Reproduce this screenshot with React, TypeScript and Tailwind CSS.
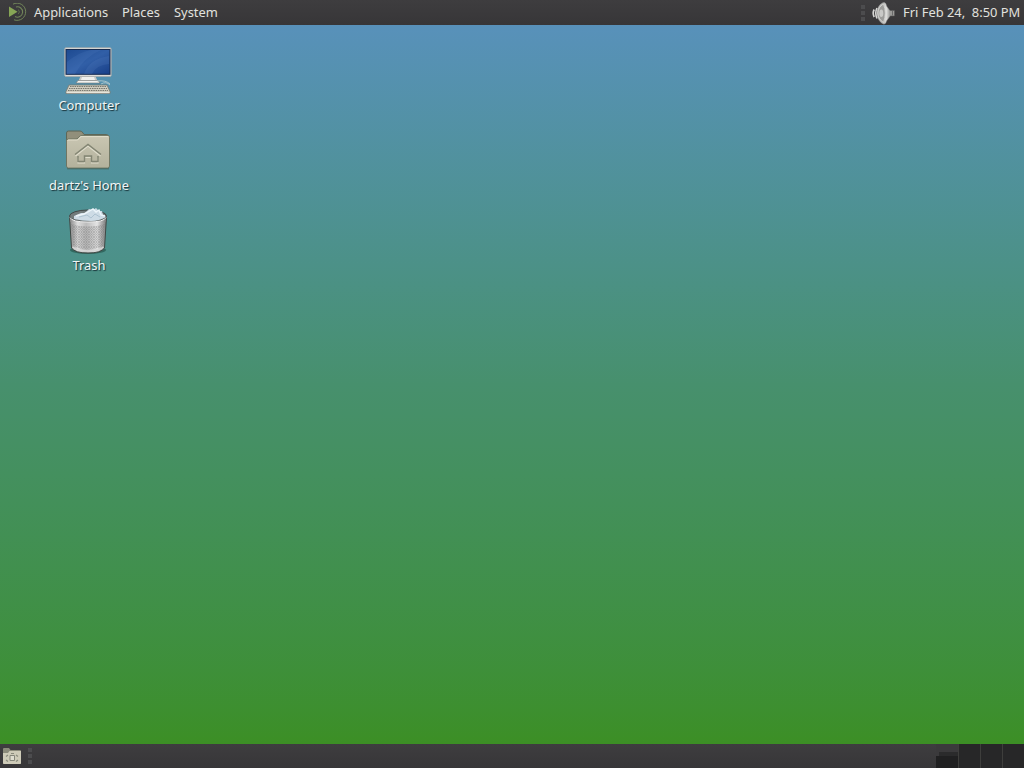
import type { ReactNode } from 'react';

const MateLogo = () => (
  <svg width="20" height="20" viewBox="0 0 20 20" fill="none">
    <path d="M2 3.500v10.500L10.500 8.800z" fill="#87a556" />
    <path d="M6 1.200A8.600 8.600 0 1 1 7 16.800" stroke="#71855a" strokeWidth="1" />
    <path d="M9 4A5.200 5.200 0 1 1 8 13.600" stroke="#71855a" strokeWidth="1.100" />
    <path d="M11 6.700A2.400 2.400 0 0 1 11 11" stroke="#657850" strokeWidth=".8" />
  </svg>
);

const SpeakerIcon = () => (
  <svg width="24" height="24" viewBox="0 0 24 24">
    <defs>
      <linearGradient id="cone" x1="0" x2="1">
        <stop offset="0" stopColor="#c4c4c2" />
        <stop offset=".5" stopColor="#b1b1af" />
        <stop offset=".7" stopColor="#e4e4e2" />
        <stop offset="1" stopColor="#999997" />
      </linearGradient>
    </defs>
    <path d="M2.200 8.500Q.2 12 2.200 16M5 7Q2.600 12 5 17.500" fill="none" stroke="#d5d5d3" strokeWidth="1.700" />
    <path d="M16 9.500h6.500v5.500H16z" fill="#9a9a98" stroke="#555" strokeWidth=".6" />
    <path d="M12 1.500q2 .2 2.500 3.500l3.500 5v5l-3.500 5q-.5 3-2.500 3.200C9 22.500 5 18 5 12S9 1.700 12 1.500z" fill="url(#cone)" stroke="#999" strokeWidth=".5" />
    <path d="M11.500 3Q15 12 11.500 21.500Q6 18 6 12T11.500 3z" fill="#9c9c9a" stroke="#d8d8d6" strokeWidth=".8" />
    <ellipse cx="9.300" cy="12.200" rx="2" ry="3.800" fill="#c9c9c7" />
    <path d="M20.500 10v4.500" stroke="#6a6a6a" />
  </svg>
);

const ComputerIcon = () => (
  <svg width="48" height="48" viewBox="0 0 48 48">
    <defs>
      <linearGradient id="screen" x1="0" y1="0" x2="1" y2="1">
        <stop offset="0" stopColor="#1d4a91" />
        <stop offset=".5" stopColor="#315fa7" />
        <stop offset="1" stopColor="#183f88" />
      </linearGradient>
    </defs>
    <path d="M17 28h14l2.500 6h-19z" fill="#c8c8c6" />
    <path d="M18 30h12l1 3H17z" fill="#efefed" />
    <rect x=".7" y=".8" width="46.500" height="28.600" rx="1.200" fill="#e3e2df" stroke="#a5a7a5" strokeWidth=".8" />
    <rect x="2" y="2.500" width="44" height="24.800" fill="url(#screen)" stroke="#142a50" />
    <path d="M3 15Q15 5 27 3h10Q20 10 11 27H3z" fill="#5b85c7" opacity=".18" />
    <path d="M20 27Q25 12 45 9v8Q32 18 28 27z" fill="#6c96d2" opacity=".15" />
    <path d="M14 33.500h20l2 2.500H12z" fill="#f2f2f0" stroke="#747673" strokeWidth=".6" />
    <path d="M33 34q9-1 13 3M37 37q5-3 9 1" fill="none" stroke="#bfd0d2" strokeWidth=".8" />
    <path d="M5 38h38l3 6.500v2H2v-2z" fill="#d0cdc0" stroke="#777970" strokeWidth=".8" />
    <path d="M6 39.500h36M5 41.500h38M4 43.500h40" stroke="#77776e" strokeWidth="1" strokeDasharray="1.500 .8" />
    <path d="M2.500 45.700h43" stroke="#f1eee5" strokeWidth=".9" />
  </svg>
);

const HomeFolderIcon = () => (
  <svg width="48" height="48" viewBox="0 -1 48 48">
    <defs>
      <linearGradient id="folder" x1="0" y1="0" x2="0" y2="1">
        <stop offset="0" stopColor="#c9c6b2" />
        <stop offset="1" stopColor="#b3b19c" />
      </linearGradient>
    </defs>
    <path d="M2.500 38V5q0-2 2-2H16q2 0 3 2l1 1.500h22q3 0 3 3V38z" fill="#8e8d78" stroke="#5d6758" />
    <path d="M3.500 5q0-1 1-1H16q1 0 2 2l1 2h-3q-2 0-3 1.500T10.500 11h-7z" fill="#918f7b" />
    <path d="M2.500 13q0-2 2-2H13l3.500-3.500H44q1.500 0 1.500 2V38q0 2-2 2h-39q-2 0-2-2z" fill="url(#folder)" stroke="#676e5c" strokeWidth=".8" />
    <path d="M3.600 13q0-1 1-1h9L17 8.600h27.400" fill="none" stroke="#e4e1cf" strokeWidth=".9" />
    <path d="M11.500 27L24 17l12.500 10M14 28.500V34h6.500v-5.500h7V34H34v-5.500" transform="translate(0 1)" fill="none" stroke="#dfdccb" strokeWidth="1.200" />
    <path d="M11 26.500L24 16.500l13 10M14 28V33.500h6.500v-5.500h7v5.500H34V28" fill="none" stroke="#838573" strokeWidth="1.500" />
    <path d="M3 40.800h42" stroke="#4a5d51" strokeWidth=".8" />
  </svg>
);

const TrashIcon = () => (
  <svg width="48" height="48" viewBox="0 0 48 48">
    <defs>
      <linearGradient id="bin" x1="0" x2="1">
        <stop offset="0" stopColor="#858585" />
        <stop offset=".22" stopColor="#dedede" />
        <stop offset=".45" stopColor="#bcbcbc" />
        <stop offset=".75" stopColor="#e4e4e4" />
        <stop offset="1" stopColor="#777" />
      </linearGradient>
      <pattern id="mesh" width="2.500" height="2.500" patternUnits="userSpaceOnUse">
        <path d="M0 0l2.500 2.500M2.500 0L0 2.500" stroke="#666" strokeWidth=".5" />
      </pattern>
    </defs>
    <ellipse cx="24" cy="43" rx="18" ry="4" fill="#173f36" opacity=".5" />
    <path d="M5.500 10L7.500 41Q11 46 24 46t16.500-5L42.500 10z" fill="url(#bin)" stroke="#3f4845" />
    <path d="M7.500 17L9 39Q24 46 39 39L40.500 17Q24 22 7.500 17z" fill="url(#mesh)" opacity=".65" />
    <ellipse cx="24" cy="9" rx="18.500" ry="6" fill="#727b7c" stroke="#424848" />
    <path d="M10 9l7-3 4 0 4-4 4 1 3-2 3 3 3 0 1 4 3 2q-7 4-15 4T10 12z" fill="#cddbe5" />
    <path d="M12 9l8-2 4-2 5-3 3 3 3-2 2 5 4 1" fill="none" stroke="#edf5fa" strokeWidth="1.400" />
    <path d="M15 10l8-2 4 3 4-4 5 3" fill="none" stroke="#9fb7c7" strokeWidth=".7" />
    <path d="M5.700 10q1 5 18.300 5t18.300-5l-.5 4.500Q37 19 24 19T6.200 14.500z" fill="url(#bin)" />
    <path d="M6 10.500q2 4.500 18 4.500t18-4.500" fill="none" stroke="#f0f0f0" strokeWidth="1" />
    <path d="M8.500 40q4 4 15.500 4t15.500-4" fill="none" stroke="#d6d6d6" strokeWidth="1.300" />
  </svg>
);

const PanelFolderIcon = () => (
  <svg width="20" height="20" viewBox="0 0 20 20">
    <path d="M1 17V3q0-1 1-1h5l1.500 2H18q1 0 1 1v12q0 1-1 1H2q-1 0-1-1z" fill="#8b8b7b" />
    <path d="M1 7h5l1.500-2H19v12q0 1-1 1H2q-1 0-1-1z" fill="#cecbb8" />
    <path d="M4 10.500l2-1.500M14 9l2 1.500M4 14l2 1.500M14 15.500l2-1.500M9 7.500h3" stroke="#8a8b7d" strokeWidth="1.200" />
    <path d="M8 9.500h4.500v5H8z" fill="#deddcf" stroke="#85867a" />
  </svg>
);

const Handle = () => (
  <div className="flex w-1 flex-col gap-[2px]">
    <span className="h-1 w-1 bg-[#4c4c4e]" />
    <span className="h-1 w-1 bg-[#4c4c4e]" />
    <span className="h-1 w-1 bg-[#4c4c4e]" />
  </div>
);

const DesktopIcon = ({ label, children }: { label: string; children: ReactNode }) => (
  <div className="flex h-20 w-[120px] flex-col items-center">
    <div className="h-12">{children}</div>
    <span className="ml-[2px] leading-5 whitespace-nowrap text-[#f0f5f5] [text-shadow:1px_1px_1px_#173239]">
      {label}
    </span>
  </div>
);

const App = () => {
  return (
    <div className="flex h-[768px] w-[1024px] flex-col overflow-hidden font-['Noto_Sans',sans-serif] text-[12.9px] text-[#e1e1df]">
      <header className="flex h-[25px] shrink-0 items-center justify-between bg-linear-to-b from-[#3e3d3f] to-[#373638] pr-[3px] pl-[7px]">
        <nav className="flex items-center">
          <MateLogo />
          <span className="ml-[7px] w-[88px] whitespace-nowrap">Applications</span>
          <span className="w-[52px]">Places</span>
          <span>System</span>
        </nav>
        <div className="flex items-center">
          <Handle />
          <div className="ml-[7px]"><SpeakerIcon /></div>
          <span className="ml-[7px] w-[118px] whitespace-pre">Fri Feb 24,  8:50 PM</span>
        </div>
      </header>

      <main className="flex-1 bg-linear-to-b from-[#5891ba] via-[#47906d] to-[#3c8f25] pt-[22px] pl-7">
        <DesktopIcon label="Computer"><ComputerIcon /></DesktopIcon>
        <DesktopIcon label="dartz's Home"><HomeFolderIcon /></DesktopIcon>
        <DesktopIcon label="Trash"><TrashIcon /></DesktopIcon>
      </main>

      <footer className="flex h-6 shrink-0 items-center justify-between bg-linear-to-b from-[#3e3d3f] to-[#373638] pl-[2px]">
        <div className="flex items-center gap-[6px]">
          <PanelFolderIcon />
          <Handle />
        </div>
        <div className="flex h-full gap-px bg-[#3e3e3c]">
          <div className="flex w-[22px] flex-col bg-[#3b3a3c] pt-2">
            <div className="ml-[3px] h-1 bg-[#2b2b2c]" />
            <div className="flex-1 bg-[#202021]" />
          </div>
          <div className="w-[21px] bg-[#272728]" />
          <div className="w-[21px] bg-[#272728]" />
          <div className="w-[21px] bg-[#272728]" />
        </div>
      </footer>
    </div>
  );
};

export default App;
